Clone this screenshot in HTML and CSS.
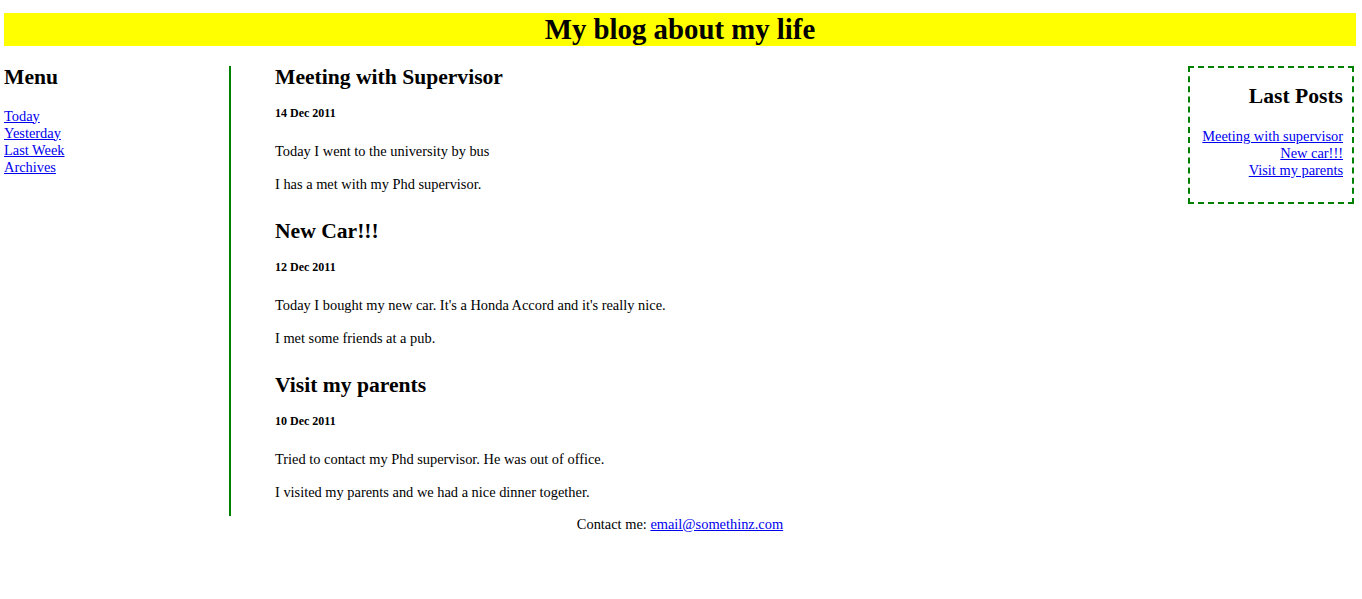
FILE: index.html
```html
<!DOCTYPE html>
<html lang="en">
<head>
<meta charset="utf-8">
<title>My blog about my life</title>
<link rel="stylesheet" href="styles.css">
</head>
<body>
<header class="site-header">
  <h1 class="site-title">My blog about my life</h1>
</header>
<div class="layout">
  <nav class="menu">
    <h2 class="menu-title">Menu</h2>
    <a class="menu-link" href="#">Today</a>
    <a class="menu-link" href="#">Yesterday</a>
    <a class="menu-link" href="#">Last Week</a>
    <a class="menu-link" href="#">Archives</a>
  </nav>
  <main class="content">
    <article class="post">
      <h2 class="post-title">Meeting with Supervisor</h2>
      <h5 class="post-date">14 Dec 2011</h5>
      <p class="post-text">Today I went to the university by bus</p>
      <p class="post-text">I has a met with my Phd supervisor.</p>
    </article>
    <article class="post">
      <h2 class="post-title">New Car!!!</h2>
      <h5 class="post-date">12 Dec 2011</h5>
      <p class="post-text">Today I bought my new car. It's a Honda Accord and it's really nice.</p>
      <p class="post-text">I met some friends at a pub.</p>
    </article>
    <article class="post">
      <h2 class="post-title">Visit my parents</h2>
      <h5 class="post-date">10 Dec 2011</h5>
      <p class="post-text">Tried to contact my Phd supervisor. He was out of office.</p>
      <p class="post-text">I visited my parents and we had a nice dinner together.</p>
    </article>
  </main>
  <aside class="last-posts">
    <h2 class="last-title">Last Posts</h2>
    <a class="last-link" href="#">Meeting with supervisor</a>
    <a class="last-link" href="#">New car!!!</a>
    <a class="last-link" href="#">Visit my parents</a>
  </aside>
</div>
<footer class="site-footer">
  Contact me: <a class="footer-link" href="#">email@somethinz.com</a>
</footer>
</body>
</html>
```

FILE: styles.css
```css
html, body {
  background: #ffffff;
}

body {
  margin: 0 6px 0 4px;
  padding-top: 13px;
  font-family: "Liberation Serif", "Times New Roman", serif;
  font-size: 14.4px;
  line-height: 17px;
  color: #000000;
}

a {
  color: #0000ee;
  text-decoration: underline;
}

.site-header {
  background: #ffff00;
}

.site-title {
  margin: 0;
  font-size: 28.8px;
  line-height: 33px;
  font-weight: bold;
  text-align: center;
}

.layout {
  display: flex;
  align-items: flex-start;
  margin-top: 20px;
}

.menu {
  width: 225px;
  flex: none;
  display: flex;
  flex-direction: column;
  align-items: flex-start;
}

.menu-title,
.post-title,
.last-title {
  margin: 0;
  font-size: 21.6px;
  line-height: 23px;
  font-weight: bold;
}

.menu-title {
  margin-bottom: 18.5px;
}

.menu-link {
  display: block;
  line-height: 17px;
}

.content {
  flex: 1;
  border-left: 2px solid #008000;
  padding: 0 0 15px 44px;
}

.post + .post {
  margin-top: 27px;
}

.post-date {
  margin: 17px 0 23px;
  font-size: 12px;
  line-height: 14px;
  font-weight: bold;
}

.post-text {
  margin: 0;
  line-height: 17px;
}

.post-text + .post-text {
  margin-top: 16px;
}

.last-posts {
  flex: none;
  width: 146px;
  margin-right: 2px;
  border: 2px dashed #008000;
  padding: 17px 9px 23px 7px;
  text-align: right;
  display: flex;
  flex-direction: column;
  align-items: flex-end;
}

.last-title {
  margin-bottom: 20px;
}

.last-link {
  display: block;
  line-height: 17px;
}

.site-footer {
  text-align: center;
  line-height: 17px;
}
```
